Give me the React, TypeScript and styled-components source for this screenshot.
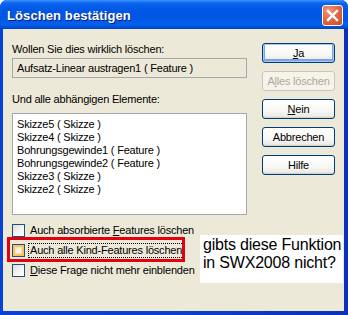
import React from 'react';
import styled, {createGlobalStyle} from 'styled-components';

const GlobalStyle = createGlobalStyle`
  html, body {
    margin: 0;
    padding: 0;
    background: #ffffff;
  }
  body {
    font-family: "Liberation Sans", Arial, sans-serif;
  }
`;

const deps = [
    'Skizze5 ( Skizze )',
    'Skizze4 ( Skizze )',
    'Bohrungsgewinde1 ( Feature )',
    'Bohrungsgewinde2 ( Feature )',
    'Skizze3 ( Skizze )',
    'Skizze2 ( Skizze )',
];

export default function App() {
    return (
        <>
            <GlobalStyle/>
            <Window>
                <TitleBar>
                    <Title>Löschen bestätigen</Title>
                    <CloseButton aria-label="Schließen">
                        <svg width="13" height="13" viewBox="0 0 13 13">
                            <path d="M2 2 L11 11 M11 2 L2 11" stroke="#ffffff" strokeWidth="2.4" strokeLinecap="square"/>
                        </svg>
                    </CloseButton>
                </TitleBar>
                <Body>
                    <LeftColumn>
                        <Label>Wollen Sie dies wirklich löschen:</Label>
                        <ReadOnlyField>Aufsatz-Linear austragen1 ( Feature )</ReadOnlyField>
                        <Label $top={15}>Und alle abhängigen Elemente:</Label>
                        <ListBox>
                            {deps.map(d => <ListItem key={d}>{d}</ListItem>)}
                        </ListBox>
                        <Options>
                            <CheckRow>
                                <CheckBox/>
                                <CheckText>Auch absorbierte <u>F</u>eatures löschen</CheckText>
                            </CheckRow>
                            <CheckRow>
                                <CheckBox $hover/>
                                <CheckText $focused>Auch alle Kind-Features löschen</CheckText>
                            </CheckRow>
                            <CheckRow>
                                <CheckBox/>
                                <CheckText><u>D</u>iese Frage nicht mehr einblenden</CheckText>
                            </CheckRow>
                        </Options>
                    </LeftColumn>
                    <ButtonColumn>
                        <Button $default><u>J</u>a</Button>
                        <Button disabled>A<u>l</u>les löschen</Button>
                        <Button><u>N</u>ein</Button>
                        <Button>Abbrechen</Button>
                        <Button>Hilfe</Button>
                    </ButtonColumn>
                </Body>
                <RedMark/>
                <Note>gibts diese Funktion<br/>in SWX2008 nicht?</Note>
            </Window>
        </>
    );
}

const Window = styled.div`
  position: relative;
  width: 348px;
  height: 315px;
  display: flex;
  flex-direction: column;
  background: linear-gradient(to right, #0842D6 0%, #0A3FD0 50%, #0B2FB8 100%);
  border-radius: 7px 7px 0 0;
  overflow: hidden;
`;

const TitleBar = styled.div`
  height: 29px;
  flex: none;
  display: flex;
  align-items: center;
  justify-content: space-between;
  padding: 1px 5px 0 7px;
  box-sizing: border-box;
  background: linear-gradient(to bottom,
    #3E95FF 0px, #1A73F7 2px, #0860EA 4px, #0058E6 10px,
    #0056E2 18px, #0460EC 24px, #0152DA 27px, #0040C8 29px);
`;

const Title = styled.span`
  color: #ffffff;
  font-size: 13px;
  font-weight: bold;
  letter-spacing: 0.1px;
  text-shadow: 1px 1px 0 #0A1E7A;
`;

const CloseButton = styled.div`
  width: 21px;
  height: 21px;
  box-sizing: border-box;
  border: 1px solid #ffffff;
  border-radius: 3px;
  display: flex;
  align-items: center;
  justify-content: center;
  background: radial-gradient(circle at 30% 25%, #F09A80 0%, #E06A48 45%, #CC4A22 100%);
`;

const Body = styled.div`
  flex: 1;
  margin: 0 4px 4px 3px;
  background: #ECE9D8;
  display: flex;
  padding: 14px 0 0 9px;
  gap: 15px;
  font-size: 11px;
  letter-spacing: -0.2px;
  color: #000000;
`;

const LeftColumn = styled.div`
  width: 235px;
  display: flex;
  flex-direction: column;
`;

const Label = styled.div<{ $top?: number }>`
  height: 13px;
  line-height: 13px;
  margin-top: ${p => p.$top ?? 0}px;
`;

const ReadOnlyField = styled.div`
  margin-top: 2px;
  height: 20px;
  box-sizing: border-box;
  border: 1px solid #A7A6AA;
  line-height: 18px;
  padding: 0 4px;
`;

const ListBox = styled.div`
  margin-top: 7px;
  height: 102px;
  box-sizing: border-box;
  border: 1px solid #A7A6AA;
  background: #ffffff;
  padding: 4px 0 0 4px;
`;

const ListItem = styled.div`
  height: 13px;
  line-height: 13px;
`;

const Options = styled.div`
  margin-top: 5px;
  display: flex;
  flex-direction: column;
`;

const CheckRow = styled.div`
  height: 20px;
  display: flex;
  align-items: center;
  gap: 3px;
`;

const CheckBox = styled.span<{ $hover?: boolean }>`
  width: 13px;
  height: 13px;
  box-sizing: border-box;
  border: 1px solid #1C5180;
  background: linear-gradient(135deg, #DCDCD7 0%, #F6F6F4 60%, #ffffff 100%);
  box-shadow: ${p => p.$hover ? 'inset 0 0 0 2px #F8C55E, inset 0 0 0 3px #FEE3A8' : 'none'};
`;

const CheckText = styled.span<{ $focused?: boolean }>`
  line-height: 13px;
  padding: 0 1px;
  border: 1px dotted ${p => p.$focused ? '#000000' : 'transparent'};
`;

const ButtonColumn = styled.div`
  display: flex;
  flex-direction: column;
  gap: 8px;
`;

const Button = styled.button<{ $default?: boolean }>`
  width: 73px;
  height: 20px;
  padding: 0;
  font-family: inherit;
  font-size: 11px;
  letter-spacing: -0.2px;
  color: #000000;
  border-radius: 3px;
  border: 1px solid #003C74;
  background: linear-gradient(to bottom, #FFFFFF 0%, #F7F7F4 60%, #ECEBE6 90%, #D6D0C5 100%);
  box-shadow: ${p => p.$default
    ? 'inset 0 0 0 1px #A8C9F4, inset 0 -1px 0 2px #7AA4E8'
    : 'inset 0 -1px 0 #D6D0C5'};

  &:disabled {
    color: #ACA899;
    border-color: #C9C7BA;
    background: #F5F4EA;
    box-shadow: none;
  }
`;

const RedMark = styled.div`
  position: absolute;
  left: 7px;
  top: 237px;
  width: 178px;
  height: 25px;
  box-sizing: border-box;
  border: 3px solid #E5000F;
`;

const Note = styled.div`
  position: absolute;
  left: 200px;
  top: 235px;
  width: 143px;
  height: 48px;
  box-sizing: border-box;
  background: #ffffff;
  padding: 1px 0 0 3px;
  font-family: "Liberation Sans", Arial, sans-serif;
  font-size: 16px;
  letter-spacing: -0.2px;
  line-height: 18px;
  white-space: nowrap;
  color: #000000;
`;
